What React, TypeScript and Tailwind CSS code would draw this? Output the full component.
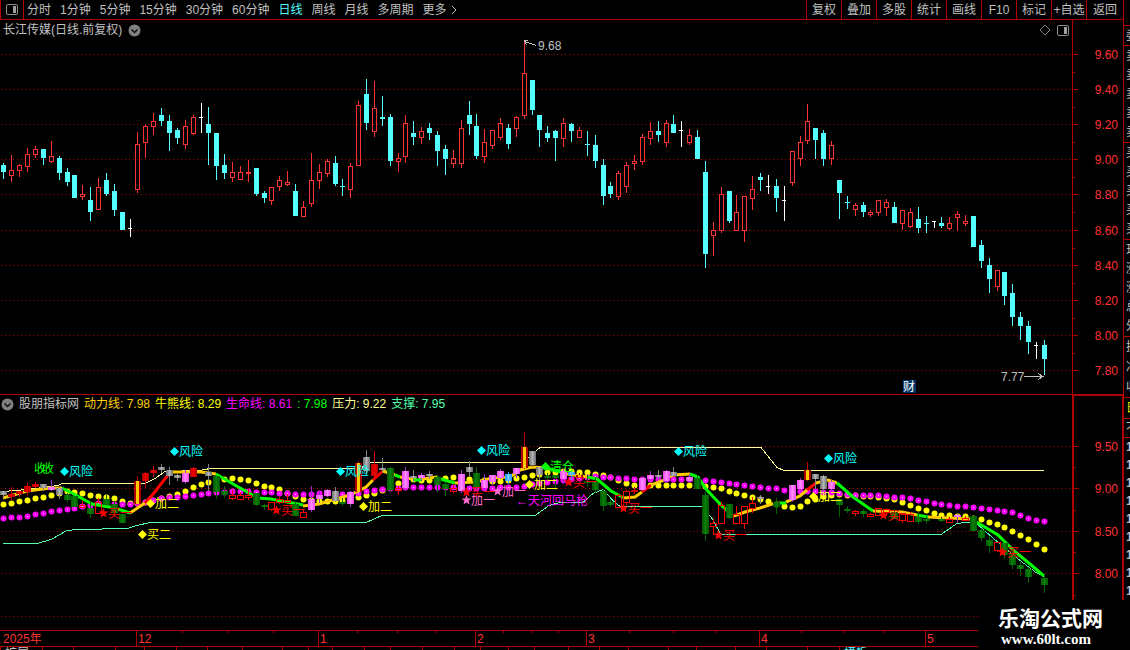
import React from "react";
import clsx from "clsx";

type Candle = [kind: string, sub: string, high: number, top: number, bottom: number, low: number];
type Point = [number, number];

// kind: d = falling, u = rising, w = doji
// sub: colour of the same day in the indicator pane
const candles: Candle[] = [
  ["d", "grey", 163, 165, 172, 179],
  ["u", "red", 155, 170, 176, 182],
  ["u", "red", 164, 165, 171, 177],
  ["u", "red", 148, 154, 167, 172],
  ["u", "red", 146, 149, 155, 158],
  ["d", "grey", 149, 149, 158, 165],
  ["u", "pink", 141, 156, 162, 163],
  ["d", "grey", 156, 158, 173, 180],
  ["d", "green", 168, 172, 182, 186],
  ["d", "green", 175, 175, 198, 198],
  ["u", "hollow", 185, 194, 197, 200],
  ["d", "green", 187, 200, 212, 221],
  ["u", "hollow", 178, 187, 210, 210],
  ["d", "green", 173, 180, 194, 196],
  ["d", "green", 184, 191, 210, 216],
  ["d", "green", 212, 212, 230, 230],
  ["w", "", 219, 228, 229, 237],
  ["u", "gold", 132, 144, 190, 193],
  ["u", "red", 124, 126, 143, 158],
  ["u", "red", 113, 121, 127, 135],
  ["d", "grey", 108, 115, 121, 126],
  ["d", "grey", 115, 121, 133, 151],
  ["d", "grey", 128, 130, 138, 144],
  ["u", "pink", 120, 126, 145, 149],
  ["u", "red", 115, 117, 134, 135],
  ["w", "", 103, 117, 118, 133],
  ["d", "grey", 107, 124, 133, 165],
  ["d", "green", 133, 133, 166, 180],
  ["d", "green", 154, 165, 173, 179],
  ["u", "hollow", 162, 172, 178, 182],
  ["u", "hollow", 166, 172, 180, 180],
  ["u", "hollow", 160, 172, 174, 182],
  ["d", "green", 168, 168, 194, 196],
  ["d", "green", 191, 193, 198, 203],
  ["u", "hollow", 187, 187, 201, 205],
  ["u", "hollow", 176, 180, 187, 191],
  ["u", "hollow", 171, 182, 185, 186],
  ["d", "green", 184, 191, 216, 216],
  ["u", "hollow", 201, 207, 217, 217],
  ["u", "pink", 153, 180, 204, 207],
  ["u", "pink", 164, 172, 181, 189],
  ["u", "pink", 159, 161, 174, 177],
  ["d", "grey", 156, 163, 184, 186],
  ["d", "green", 179, 186, 187, 196],
  ["u", "pink", 163, 166, 190, 198],
  ["u", "gold", 101, 105, 166, 166],
  ["d", "grey", 79, 94, 123, 130],
  ["u", "red", 81, 108, 132, 137],
  ["d", "grey", 96, 117, 119, 126],
  ["d", "green", 114, 117, 161, 166],
  ["u", "hollow", 153, 158, 162, 172],
  ["u", "pink", 115, 123, 157, 163],
  ["d", "grey", 121, 133, 137, 145],
  ["u", "pink", 127, 131, 138, 144],
  ["d", "grey", 123, 128, 133, 140],
  ["d", "green", 131, 135, 151, 166],
  ["d", "green", 145, 149, 159, 175],
  ["u", "hollow", 150, 158, 164, 168],
  ["u", "pink", 120, 128, 164, 168],
  ["d", "grey", 101, 115, 124, 135],
  ["d", "green", 114, 126, 156, 159],
  ["u", "pink", 129, 142, 157, 163],
  ["u", "pink", 130, 130, 146, 149],
  ["u", "pink", 118, 123, 138, 140],
  ["d", "blue", 124, 128, 144, 149],
  ["u", "pink", 116, 117, 129, 137],
  ["u", "gold", 41, 73, 116, 119],
  ["d", "grey", 80, 80, 110, 115],
  ["d", "grey", 115, 115, 130, 147],
  ["d", "green", 126, 133, 138, 142],
  ["d", "green", 130, 131, 138, 161],
  ["u", "pink", 118, 123, 139, 147],
  ["d", "blue", 123, 124, 131, 142],
  ["u", "gold", 127, 130, 138, 138],
  ["d", "green", 131, 144, 145, 156],
  ["d", "green", 135, 145, 161, 168],
  ["d", "green", 159, 165, 196, 205],
  ["d", "green", 182, 186, 194, 198],
  ["u", "hollow", 171, 173, 197, 200],
  ["u", "hollow", 162, 165, 187, 193],
  ["u", "red", 155, 161, 164, 170],
  ["u", "pink", 134, 137, 162, 165],
  ["u", "pink", 122, 131, 139, 145],
  ["d", "grey", 121, 131, 135, 142],
  ["u", "pink", 120, 123, 143, 147],
  ["d", "grey", 115, 124, 133, 133],
  ["w", "", 121, 130, 131, 147],
  ["u", "pink", 129, 135, 143, 145],
  ["d", "green", 130, 137, 159, 159],
  ["d", "green", 161, 172, 254, 268],
  ["u", "hollow", 222, 230, 236, 256],
  ["u", "hollow", 187, 194, 231, 233],
  ["d", "green", 191, 191, 221, 223],
  ["u", "hollow", 195, 212, 231, 231],
  ["u", "hollow", 196, 196, 231, 242],
  ["u", "hollow", 176, 189, 199, 210],
  ["d", "grey", 173, 177, 180, 191],
  ["w", "", 175, 186, 187, 194],
  ["d", "green", 179, 186, 198, 212],
  ["w", "", 186, 200, 201, 221],
  ["u", "pink", 151, 151, 183, 186],
  ["u", "pink", 136, 142, 159, 166],
  ["u", "gold", 104, 121, 141, 144],
  ["d", "grey", 128, 128, 140, 159],
  ["d", "grey", 130, 133, 159, 166],
  ["u", "pink", 141, 145, 159, 165],
  ["d", "green", 180, 180, 193, 219],
  ["d", "green", 196, 202, 203, 209],
  ["u", "hollow", 203, 205, 210, 216],
  ["d", "green", 202, 205, 212, 217],
  ["u", "hollow", 210, 212, 215, 217],
  ["u", "hollow", 200, 200, 213, 216],
  ["u", "hollow", 199, 202, 208, 216],
  ["d", "green", 202, 207, 223, 223],
  ["u", "hollow", 210, 210, 224, 230],
  ["u", "hollow", 208, 212, 227, 228],
  ["d", "green", 207, 219, 228, 233],
  ["d", "green", 216, 223, 224, 233],
  ["w", "", 221, 221, 222, 228],
  ["d", "green", 217, 223, 226, 228],
  ["u", "hollow", 217, 223, 229, 230],
  ["u", "pink", 211, 214, 218, 231],
  ["u", "hollow", 215, 221, 224, 226],
  ["d", "green", 216, 216, 247, 247],
  ["d", "green", 240, 245, 261, 268],
  ["d", "green", 258, 265, 279, 293],
  ["u", "hollow", 270, 270, 287, 291],
  ["d", "green", 272, 272, 296, 305],
  ["d", "green", 284, 293, 317, 326],
  ["d", "green", 312, 317, 326, 340],
  ["d", "green", 321, 326, 342, 354],
  ["w", "", 342, 345, 346, 359],
  ["d", "green", 340, 345, 359, 375],
];

const dayX = (i: number) => Math.floor(3.97 + i * 7.882);
// price scale of the candle pane -> price scale of the indicator pane
const toSub = (y: number) => Math.round(438 + (y - 54) * 0.4818);

const mainGrid: [string, number][] = [
  ["9.60", 54],
  ["9.40", 89],
  ["9.20", 124],
  ["9.00", 159],
  ["8.80", 194],
  ["8.60", 230],
  ["8.40", 265],
  ["8.20", 300],
  ["8.00", 335],
  ["7.80", 370],
];
const subGrid: [string, number][] = [
  ["9.50", 446],
  ["9.00", 488],
  ["8.50", 531],
  ["8.00", 573],
  ["", 616],
];

const bull: Point[] = [
  [3, 504], [27, 500], [51, 495], [67, 491], [82, 493], [98, 496], [114, 498], [130, 503], [145, 502],
  [161, 498], [177, 494], [193, 487], [208, 482], [216, 480], [232, 478], [248, 480], [264, 486], [279, 489],
  [295, 496], [303, 499], [319, 501], [334, 501], [350, 499], [366, 495], [382, 490], [398, 483], [413, 479],
  [429, 480], [453, 477], [476, 480], [500, 481], [516, 478], [532, 475], [547, 472], [571, 471], [587, 472],
  [603, 475], [618, 480], [634, 485], [697, 485], [705, 486], [721, 488], [737, 493], [752, 497], [768, 501],
  [784, 506], [792, 507], [800, 506], [807, 501], [823, 496], [839, 494], [871, 496], [894, 499], [910, 505],
  [926, 510], [941, 515], [965, 516], [981, 519], [1005, 527], [1028, 539], [1044, 549],
];
const life: Point[] = [
  [3, 518], [27, 516], [51, 511], [74, 508], [98, 503], [122, 504], [140, 503], [161, 498], [185, 496],
  [208, 493], [232, 491], [271, 492], [303, 494], [326, 493], [350, 494], [366, 491], [390, 488], [413, 487],
  [437, 487], [476, 488], [516, 487], [532, 484], [555, 481], [595, 476], [634, 479], [697, 479], [713, 481],
  [737, 484], [760, 487], [776, 488], [784, 490], [800, 491], [831, 492], [855, 495], [878, 495], [910, 498],
  [941, 504], [973, 507], [989, 509], [1012, 512], [1028, 518], [1044, 521],
];

const momentum: [string, string][] = [
  ["#ffcc00", "3,498 27,491 51,488 62,488"],
  ["#00ff00", "62,488 72,493 92,504 115,508 130,513"],
  ["#ffcc00", "130,513 145,503"],
  ["#ff0000", "145,503 154,493 168,475"],
  ["#ffcc00", "168,474 173,472 201,472 216,474"],
  ["#00ff00", "216,474 240,488 258,498 271,499 303,505"],
  ["#ffcc00", "303,506 319,504 350,495 366,487 373,480"],
  ["#ff0000", "373,480 383,471"],
  ["#ffcc00", "383,471 395,475"],
  ["#00ff00", "395,475 400,477"],
  ["#ffcc00", "400,477 413,479"],
  ["#00ff00", "413,480 422,480"],
  ["#ffcc00", "422,479 437,477"],
  ["#00ff00", "437,478 455,483"],
  ["#ffcc00", "455,483 476,482 492,478 510,477 520,470 532,467 547,468"],
  ["#00ff00", "547,468 560,472"],
  ["#ffcc00", "560,473 588,477"],
  ["#00ff00", "588,477 597,479 611,491 624,498"],
  ["#ffcc00", "624,498 635,497 642,492"],
  ["#ff0000", "642,492 651,485"],
  ["#ffcc00", "651,485 662,481 673,475 690,474"],
  ["#00ff00", "690,474 698,477 706,489 720,504 734,517"],
  ["#ffcc00", "734,516 745,512 760,508 772,504 780,503"],
  ["#00ff00", "780,503 786,503"],
  ["#ffcc00", "786,502 800,496 807,490"],
  ["#ff0000", "807,490 816,483"],
  ["#ffcc00", "816,483 828,480 837,483"],
  ["#00ff00", "837,483 853,497 873,511"],
  ["#ffcc00", "873,511 902,512 917,515"],
  ["#00ff00", "917,515 928,517"],
  ["#ffcc00", "928,517 970,519"],
  ["#00ff00", "970,519 978,523 998,535 1013,550 1030,564 1044,576"],
];

const marks: { shape: "diamond" | "star" | "none"; x: number; y: number; text: string; color: string }[] = [
  { shape: "diamond", x: 64, y: 471, text: "风险", color: "#00ffff" },
  { shape: "diamond", x: 174, y: 451, text: "风险", color: "#00ffff" },
  { shape: "diamond", x: 340, y: 471, text: "风险", color: "#00ffff" },
  { shape: "diamond", x: 481, y: 450, text: "风险", color: "#00ffff" },
  { shape: "diamond", x: 678, y: 451, text: "风险", color: "#00ffff" },
  { shape: "diamond", x: 828, y: 458, text: "风险", color: "#00ffff" },
  { shape: "diamond", x: 150, y: 503, text: "加二", color: "#ffff00" },
  { shape: "diamond", x: 142, y: 534, text: "买二", color: "#ffff00" },
  { shape: "diamond", x: 363, y: 506, text: "加二", color: "#ffff00" },
  { shape: "diamond", x: 529, y: 484, text: "加二", color: "#ffff00" },
  { shape: "diamond", x: 813, y: 496, text: "加二", color: "#ffff00" },
  { shape: "diamond", x: 545, y: 466, text: "清仓", color: "#00ff00" },
  { shape: "star", x: 103, y: 513, text: "买一", color: "#ff0000" },
  { shape: "star", x: 276, y: 510, text: "买一", color: "#ff0000" },
  { shape: "star", x: 466, y: 492, text: "买一", color: "#ff0000" },
  { shape: "star", x: 568, y: 482, text: "买一", color: "#ff0000" },
  { shape: "star", x: 623, y: 508, text: "买一", color: "#ff0000" },
  { shape: "star", x: 718, y: 535, text: "买一", color: "#ff0000" },
  { shape: "star", x: 883, y: 515, text: "买一", color: "#ff0000" },
  { shape: "star", x: 1002, y: 552, text: "买一", color: "#ff0000" },
  { shape: "star", x: 466, y: 500, text: "加一", color: "#ff66cc" },
  { shape: "star", x: 497, y: 491, text: "加一", color: "#ff66cc" },
  { shape: "none", x: 511, y: 500, text: "←天河回马枪", color: "#ff00ff" },
  { shape: "none", x: 29, y: 468, text: "收", color: "#00ff00" },
  { shape: "none", x: 37, y: 468, text: "收", color: "#00ff00" },
];

const periods = ["分时", "1分钟", "5分钟", "15分钟", "30分钟", "60分钟", "日线", "周线", "月线", "多周期"];
const tools = ["复权", "叠加", "多股", "统计", "画线", "F10", "标记", "+自选", "返回"];
const legend = [
  { text: "动力线: 7.98", color: "text-[#ffcc00]" },
  { text: "牛熊线: 8.29", color: "text-[#ffff00]" },
  { text: "生命线: 8.61", color: "text-[#ff00ff]" },
  { text: ": 7.98", color: "text-[#00ff00]" },
  { text: "压力: 9.22", color: "text-[#ffff99]" },
  { text: "支撑: 7.95", color: "text-[#55ffaa]" },
];

const months: [string, number][] = [["12", 136], ["1", 318], ["2", 475], ["3", 586], ["4", 759], ["5", 925]];
const weekTicks = [182, 227, 273, 357, 397, 436, 503, 531, 558, 629, 673, 716, 801, 843, 884];

const sideGroups = [
  { rows: ["委"], height: "h-[20px]", color: "text-[#c0c0c0]" },
  { rows: ["卖", "卖", "卖", "卖", "卖"], height: "h-[97px]", color: "text-[#c0c0c0]" },
  { rows: ["买", "买", "买", "买", "买"], height: "h-[97px]", color: "text-[#c0c0c0]" },
  { rows: ["现", "涨", "涨", "总", "外"], height: "h-[97px]", color: "text-[#c0c0c0]" },
  { rows: ["换", "净", "收"], height: "h-[61px]", color: "text-[#c0c0c0]" },
  { rows: ["日"], height: "h-[21px]", color: "text-[#e0e000]" },
  { rows: ["不"], height: "h-[19px]", color: "text-[#c0c0c0]" },
];

const footTabs = [42, 31, 42, 29, 32, 31, 35, 40, 26, 24, 32, 26, 32, 32, 26, 28, 26, 34, 31, 29, 40, 28, 39, 31, 41, 32, 32];

function interpolate(points: Point[], x: number) {
  const next = points.findIndex((p) => p[0] >= x);
  if (next <= 0) return points[next === 0 ? 0 : points.length - 1][1];
  const [x0, y0] = points[next - 1];
  const [x1, y1] = points[next];
  return Math.round(y0 + ((x - x0) / (x1 - x0)) * (y1 - y0));
}

function PanelIcon() {
  return (
    <svg width="12" height="11" viewBox="0 0 12 11">
      <rect x="0.5" y="0.5" width="11" height="10" rx="1.5" fill="none" stroke="#909090" />
      <rect x="7" y="2" width="3" height="7" fill="#a0a0a0" />
    </svg>
  );
}

function Chevron() {
  return (
    <svg width="13" height="13" viewBox="0 0 13 13">
      <circle cx="6.5" cy="6.5" r="6" fill="#808080" />
      <path d="M3.5 5.5 L6.5 8.5 L9.5 5.5" fill="none" stroke="#111" strokeWidth="1.5" />
    </svg>
  );
}

function Grid({ lines }: { lines: [string, number][] }) {
  return (
    <>
      {lines.map(([, y]) => (
        <line key={y} x1="1" x2="1071" y1={y + 0.5} y2={y + 0.5} stroke="#b00000" strokeDasharray="1 3" />
      ))}
    </>
  );
}

type AxisProps = { lines: [string, number][]; minor: number[]; viewBox: string; labelX: number };

function Axis({ lines, minor, viewBox, labelX }: AxisProps) {
  return (
    <svg className="block w-full" viewBox={viewBox} shapeRendering="crispEdges">
      {lines.map(([label, y]) => (
        <g key={y}>
          <rect x="0" y={y} width="5" height="1" fill="#b00000" />
          <text x={labelX} y={y + 5} textAnchor="end" fontSize="12" fill="#ff3232">
            {label}
          </text>
        </g>
      ))}
      {minor.map((y) => (
        <rect key={y} x="0" y={y} width="2" height="1" fill="#b00000" />
      ))}
    </svg>
  );
}

function MainCandle({ candle, x }: { candle: Candle; x: number }) {
  const [kind, , high, top, bottom, low] = candle;
  if (kind === "u") {
    return (
      <g fill="#ff3232">
        <rect x={x} y={high} width="1" height={top - high} />
        <rect x={x} y={bottom} width="1" height={low - bottom} />
        <rect x={x - 1.5} y={top + 0.5} width="4" height={bottom - top - 1} fill="none" stroke="#ff3232" />
      </g>
    );
  }
  return (
    <g fill={kind === "w" ? "#ffffff" : "#54ffff"}>
      <rect x={x} y={high} width="1" height={low - high} />
      <rect x={x - 2} y={top} width={kind === "w" ? 4 : 5} height={bottom - top} />
    </g>
  );
}

const wickColor: Record<string, string> = {
  grey: "#808080",
  red: "#d00000",
  pink: "#9933cc",
  green: "#006400",
  gold: "#c00000",
  blue: "#3399ff",
  hollow: "#ff0000",
};

function SubCandle({ candle, x }: { candle: Candle; x: number }) {
  const sub = candle[1];
  if (!sub) return null;
  const [high, top, bottom, low] = candle.slice(2).map((y) => toSub(y as number));
  const height = Math.max(bottom - top, 2);
  return (
    <g>
      <rect x={x} y={high} width="1" height={Math.max(top - high, 0)} fill={wickColor[sub]} />
      <rect x={x} y={top + height} width="1" height={Math.max(low - top - height, 0)} fill={wickColor[sub]} />
      {sub === "hollow" ? (
        <rect x={x - 2.5} y={top + 0.5} width="6" height={height} fill="none" stroke="#ff0000" />
      ) : (
        <rect x={x - 3} y={top} width="7" height={height} fill={`url(#${sub})`} />
      )}
    </g>
  );
}

const shades: [string, string, string][] = [
  ["grey", "#6c6c6c", "#b4b4b4"],
  ["red", "#b00000", "#f00000"],
  ["pink", "#f040f0", "#ff8cff"],
  ["green", "#005800", "#0a800a"],
  ["blue", "#2090ff", "#70d0ff"],
];

function Mark({ mark }: { mark: (typeof marks)[number] }) {
  const { shape, x, y, text, color } = mark;
  return (
    <g fill={color} transform={`translate(${x} ${y})`} shapeRendering="geometricPrecision">
      {shape === "diamond" && <path d="M0.5 -4 L5 0.5 L0.5 5 L-4 0.5 Z" />}
      {shape === "star" && <path d="M0.5 -5 L1.8 -1.5 L5.5 -1.4 L2.6 0.8 L3.6 4.5 L0.5 2.4 L-2.6 4.5 L-1.6 0.8 L-4.5 -1.4 L-0.8 -1.5 Z" />}
      <text x="5" y="5" fontSize="12">
        {text}
      </text>
    </g>
  );
}

function Toolbar() {
  return (
    <header className="flex h-5 items-stretch border-b border-l border-[#b00000] leading-[18px]">
      <button aria-label="侧栏" className="flex w-[23px] shrink-0 items-center justify-center border-r border-[#b00000]">
        <PanelIcon />
      </button>
      <nav className="flex flex-1 items-center overflow-hidden whitespace-nowrap pl-[3px]">
        {periods.map((p) => (
          <button key={p} className={clsx("mr-[9px]", p === "日线" && "text-[#54ffff]")}>
            {p}
          </button>
        ))}
        <button className="flex items-center gap-1">
          更多
          <svg width="6" height="10" viewBox="0 0 6 10">
            <path d="M1 1 L5 5 L1 9" fill="none" stroke="#c0c0c0" />
          </svg>
        </button>
      </nav>
      {tools.map((t) => (
        <button
          key={t}
          className="w-[35px] shrink-0 whitespace-nowrap border-l border-[#b00000] text-center last:w-[37px]">
          {t}
        </button>
      ))}
    </header>
  );
}

function PricePane() {
  return (
    <section className="flex">
      <div className="min-w-0 flex-1">
        <div className="flex h-5 items-center gap-[6px] pl-[3px] pr-[3px]">
          <h1>长江传媒(日线.前复权)</h1>
          <button aria-label="展开" className="mr-auto">
            <Chevron />
          </button>
          <svg width="12" height="12" viewBox="0 0 12 12">
            <path d="M6 1 L11 6 L6 11 L1 6 Z" fill="none" stroke="#808080" />
          </svg>
          <PanelIcon />
        </div>
        <svg className="block w-full" viewBox="0 40 1072 354" shapeRendering="crispEdges">
          <Grid lines={mainGrid} />
          {candles.map((c, i) => (
            <MainCandle key={i} candle={c} x={dayX(i)} />
          ))}
          <g fontSize="12" fill="#c0c0c0">
            <path d="M536 45.5 L525 41.5 M528 40.5 L524.5 41 L526.5 45" fill="none" stroke="#c0c0c0" />
            <text x="538" y="50">9.68</text>
            <text x="1001" y="381">7.77</text>
            <path d="M1024 376.5 H1043 M1038 373.5 L1043 376.5 L1038 379.5" fill="none" stroke="#c0c0c0" />
          </g>
          <rect x="903" y="380" width="13" height="13" fill="#003366" />
          <text x="903" y="391" fontSize="12" fill="#ffffff">财</text>
        </svg>
      </div>
      <div className="w-[51px] shrink-0 border-l border-[#b00000]">
        <Axis
          lines={mainGrid}
          minor={[72, 107, 142, 177, 212, 248, 283, 318, 353]}
          viewBox="0 20 50 374"
          labelX={45}
        />
      </div>
    </section>
  );
}

function IndicatorPane() {
  return (
    <section className="flex border-t border-[#b00000]">
      <div className="min-w-0 flex-1">
        <div className="flex h-[18px] items-center gap-[5px] whitespace-nowrap pl-px leading-[18px]">
          <button aria-label="指标">
            <Chevron />
          </button>
          <span>股朋指标网</span>
          {legend.map((l) => (
            <span key={l.text} className={l.color}>
              {l.text}
            </span>
          ))}
        </div>
        <svg className="block w-full" viewBox="0 413 1072 217" shapeRendering="crispEdges">
          <defs>
            {shades.map(([id, edge, middle]) => (
              <linearGradient key={id} id={id}>
                <stop offset="0" stopColor={edge} />
                <stop offset="0.5" stopColor={middle} />
                <stop offset="1" stopColor={edge} />
              </linearGradient>
            ))}
            <linearGradient id="gold">
              <stop offset="0.28" stopColor="#b00000" />
              <stop offset="0.28" stopColor="#ffcc00" />
              <stop offset="0.72" stopColor="#ffcc00" />
              <stop offset="0.72" stopColor="#b00000" />
            </linearGradient>
          </defs>
          <Grid lines={subGrid} />
          <polyline
            points="3,491.5 27,489.5 58,485.5 62,483.5 145,483.5 155,478.5 165,471.5 200,470.5 210,468.5 360,468.5 370,462.5 520,462.5 530,456.5 540,447.5 761,447.5 777,467.5 784,470.5 1044,470.5"
            fill="none"
            stroke="#ffff99"
          />
          <polyline
            points="3,543.5 37,543.5 51,539.5 67,530.5 78,529.5 127,528.5 137,525.5 150,522.5 366,522.5 382,515.5 535,515.5 549,505.5 560,502.5 583,502.5 593,493.5 603,489.5 613,500.5 620,506.5 702,506.5 712,518.5 721,534.5 941,534.5 957,523.5 975,521.5 981,527.5 997,541.5 1020,560.5 1036,572.5 1044,576.5"
            fill="none"
            stroke="#55ffaa"
          />
          <g shapeRendering="geometricPrecision">
            {candles.map((_, i) => (
              <circle key={i} cx={dayX(i) + 0.5} cy={interpolate(bull, dayX(i)) + 0.5} r="3" fill="#ffff00" />
            ))}
            {candles.map((_, i) => (
              <g key={i}>
                <circle cx={dayX(i) + 0.5} cy={interpolate(life, dayX(i)) + 0.5} r="3" fill="#ff00ff" />
                <rect x={dayX(i)} y={interpolate(life, dayX(i))} width="1" height="1" fill="#ffc0ff" />
              </g>
            ))}
            {momentum.map(([color, points]) => (
              <polyline key={points} points={points} fill="none" stroke={color} strokeWidth="3" />
            ))}
          </g>
          {candles.map((c, i) => (
            <SubCandle key={i} candle={c} x={dayX(i)} />
          ))}
          {marks.map((m, i) => (
            <Mark key={i} mark={m} />
          ))}
        </svg>
      </div>
      <div className="w-[51px] shrink-0 border-l-2 border-r border-t border-[#b00000]">
        <Axis lines={subGrid} minor={[467, 510, 552, 595]} viewBox="0 396 48 234" labelX={44} />
      </div>
    </section>
  );
}

function Timeline() {
  return (
    <div className="border-y border-[#b00000]">
      <svg className="block w-full" viewBox="0 0 1123 15" shapeRendering="crispEdges">
        <text x="3" y="12" fontSize="12" fill="#ff3232">2025年</text>
        {months.map(([label, x]) => (
          <g key={label}>
            <rect x={x} y="0" width="1" height="15" fill="#b00000" />
            <text x={x + 2} y="12" fontSize="12" fill="#ff3232">
              {label}
            </text>
          </g>
        ))}
        {weekTicks.map((x) => (
          <rect key={x} x={x} y="0" width="1" height="2" fill="#b00000" />
        ))}
      </svg>
    </div>
  );
}

export default function App() {
  return (
    <div
      className="relative flex min-h-screen w-full overflow-hidden bg-black text-xs text-[#c0c0c0]"
      style={{ fontFamily: '"Liberation Sans", "Noto Sans CJK SC", sans-serif' }}>
      <main className="flex min-w-0 flex-1 flex-col">
        <Toolbar />
        <PricePane />
        <IndicatorPane />
        <Timeline />
        <div className="flex h-[3px] overflow-hidden leading-3">
          {footTabs.map((w, i) => (
            <span key={i} className="shrink-0 border-l border-[#b00000] pl-1" style={{ width: w }}>
              {i === 0 && "扩展"}
              {i === 26 && <span className="text-[#54ffff]">模板</span>}
            </span>
          ))}
        </div>
      </main>

      <aside className="h-[650px] w-[7px] shrink-0 overflow-hidden whitespace-nowrap border-l border-[#b00000] pt-[25px]">
        {sideGroups.map((g, i) => (
          <div key={i} className={clsx("flex flex-col justify-around border-t border-[#b00000] pl-[2px] leading-[18px]", g.height, g.color)}>
            {g.rows.map((r, j) => (
              <span key={j}>{r}</span>
            ))}
          </div>
        ))}
        <div className="border-t border-[#b00000] pl-[2px] font-bold leading-[18px]">
          {Array.from({ length: 9 }, (_, i) => (
            <div key={i}>1</div>
          ))}
        </div>
      </aside>

      <div className="absolute bottom-0 right-0 h-[50px] w-[152px] bg-black pl-5 pt-2 text-white">
        <div className="text-[21px] font-bold leading-[22px]">乐淘公式网</div>
        <div
          className="pl-[3px] text-[15px] font-bold leading-[18px]"
          style={{ fontFamily: '"Liberation Serif", serif' }}>
          www.60lt.com
        </div>
      </div>
    </div>
  );
}
